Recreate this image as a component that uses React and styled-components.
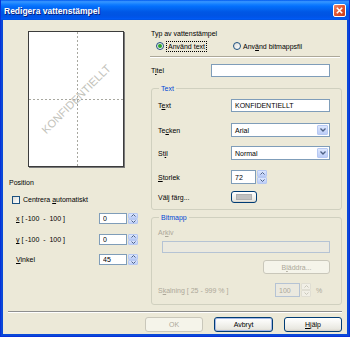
import React from 'react';
import styled, { createGlobalStyle } from 'styled-components';

const GlobalStyle = createGlobalStyle`
  html, body { margin: 0; padding: 0; background: #fff; }
  body { font-family: "Liberation Sans", Arial, sans-serif; }
  * { box-sizing: border-box; }
`;

const font = `"Liberation Sans", Arial, sans-serif`;

const Window = styled.div`
  width: 350px;
  height: 337px;
  display: flex;
  flex-direction: column;
  background: #0a48d8;
  border-left: 1px solid #0831d9;
  border-right: 1px solid #0831d9;
  border-bottom: 1px solid #0831d9;
`;

const TitleBar = styled.div`
  height: 20px;
  flex: none;
  display: flex;
  align-items: center;
  justify-content: space-between;
  padding: 1px 3px 0 3px;
  background: linear-gradient(
    to bottom,
    #0058ee 0%,
    #3593ff 8%,
    #288eff 14%,
    #127dff 22%,
    #036ffc 32%,
    #0262ee 48%,
    #0057e5 60%,
    #0054e3 76%,
    #0055eb 88%,
    #005bf5 94%,
    #0050dc 100%
  );
`;

const TitleText = styled.span`
  color: #fff;
  font: bold 8.5px ${font};
  text-shadow: 1px 1px 0 #0a1e7a;
`;

const CloseButton = styled.div`
  width: 13px;
  height: 13px;
  border: 1px solid #fff;
  border-radius: 2px;
  background: linear-gradient(135deg, #f08b6c 0%, #e2542f 50%, #c63d1b 100%);
  display: flex;
  align-items: center;
  justify-content: center;
`;

const Client = styled.div`
  flex: 1;
  margin: 0 2px 2px;
  background: #ece9d8;
  display: flex;
  flex-direction: column;
`;

const Main = styled.div`
  height: 291px;
  display: flex;
`;

const LeftCol = styled.div`
  width: 148px;
  display: flex;
  flex-direction: column;
`;

const RightCol = styled.div`
  width: 191px;
  display: flex;
  flex-direction: column;
`;

const PagePreview = styled.div`
  position: relative;
  margin: 11px 0 0 25px;
  width: 96px;
  height: 136px;
  background: #fff;
  border: 1px solid #3c3c3c;
  box-shadow: 1px 1px 0 #7a7a7a;
  overflow: hidden;
`;

const GuideV = styled.div`
  position: absolute;
  left: 48px;
  top: 0;
  bottom: 0;
  width: 1px;
  background: repeating-linear-gradient(to bottom, #a8a8a0 0 2px, transparent 2px 4px);
`;

const GuideH = styled.div`
  position: absolute;
  top: 67px;
  left: 0;
  right: 0;
  height: 1px;
  background: repeating-linear-gradient(to right, #a8a8a0 0 2px, transparent 2px 4px);
`;

const Watermark = styled.span`
  position: absolute;
  left: 50%;
  top: 50%;
  transform: translate(-50%, -50%) rotate(-45deg);
  font: 11px ${font};
  color: #c2c2ba;
  white-space: nowrap;
`;

const Label = styled.span`
  font: 7px ${font};
  line-height: 9px;
  color: ${(p) => (p.$disabled ? '#aca899' : '#000')};
  white-space: nowrap;
  width: ${(p) => (p.$w ? `${p.$w}px` : 'auto')};
  flex: none;
`;

const U = styled.span`
  text-decoration: underline;
`;

const SectionLabel = styled(Label)`
  display: block;
  margin: ${(p) => p.$mt || 0}px 0 0 ${(p) => p.$ml || 0}px;
`;

const CheckRow = styled.div`
  display: flex;
  align-items: center;
  gap: 3px;
  height: 9px;
  margin: 8px 0 0 9px;
`;

const CheckBox = styled.span`
  width: 8px;
  height: 8px;
  border: 1px solid #1c5180;
  background: linear-gradient(135deg, #dcdcd7 0%, #fff 100%);
  flex: none;
`;

const Row = styled.div`
  display: flex;
  align-items: center;
  height: ${(p) => p.$h}px;
  margin-top: ${(p) => p.$mt || 0}px;
  padding-left: ${(p) => p.$pl || 0}px;
  justify-content: ${(p) => (p.$end ? 'flex-end' : 'flex-start')};
`;

const Field = styled.input`
  width: ${(p) => p.$w}px;
  height: 100%;
  margin: 0 0 0 ${(p) => p.$ml || 0}px;
  padding: 0 0 0 3px;
  border: 1px solid ${(p) => (p.disabled ? '#b5c3d4' : '#7f9db9')};
  background: ${(p) => (p.disabled ? '#ebe9df' : '#fff')};
  color: ${(p) => (p.disabled ? '#aca899' : '#000')};
  font: 7px ${font};
  outline: none;
  flex: none;
`;

const Spin = styled.div`
  width: 10px;
  height: 100%;
  margin-left: 1px;
  display: flex;
  flex-direction: column;
  flex: none;
`;

const SpinHalf = styled.div`
  flex: 1;
  display: flex;
  align-items: center;
  justify-content: center;
  border: 1px solid ${(p) => (p.$disabled ? '#e0ded3' : '#b7c9f3')};
  border-radius: 1px;
  background: ${(p) =>
    p.$disabled ? '#f1efe6' : 'linear-gradient(to bottom, #dde7fd, #bccdf7)'};
`;

const Arrow = ({ up, disabled }) => (
  <svg width="5" height="3" viewBox="0 0 5 3">
    <path
      d={up ? 'M0.5 2.5 L2.5 0.5 L4.5 2.5' : 'M0.5 0.5 L2.5 2.5 L4.5 0.5'}
      fill="none"
      stroke={disabled ? '#c9c7ba' : '#4d6185'}
      strokeWidth="1"
    />
  </svg>
);

const Spinner = ({ disabled }) => (
  <Spin>
    <SpinHalf $disabled={disabled}>
      <Arrow up disabled={disabled} />
    </SpinHalf>
    <SpinHalf $disabled={disabled}>
      <Arrow disabled={disabled} />
    </SpinHalf>
  </Spin>
);

const Select = styled.div`
  width: ${(p) => p.$w}px;
  height: 100%;
  border: 1px solid #7f9db9;
  background: #fff;
  display: flex;
  align-items: center;
  justify-content: space-between;
  padding: 1px 1px 1px 3px;
  font: 7px ${font};
`;

const DropButton = styled.span`
  width: 11px;
  height: 100%;
  border: 1px solid #b7c9f3;
  border-radius: 1px;
  background: linear-gradient(to bottom, #dde7fd, #bccdf7);
  display: flex;
  align-items: center;
  justify-content: center;
`;

const Chevron = () => (
  <svg width="6" height="4" viewBox="0 0 6 4">
    <path d="M0.5 0.5 L3 3 L5.5 0.5" fill="none" stroke="#4d6185" strokeWidth="1.3" />
  </svg>
);

const RadioRow = styled.div`
  display: flex;
  align-items: center;
  height: 10px;
  margin-top: 3px;
  padding-left: 5px;
`;

const RadioItem = styled.label`
  display: flex;
  align-items: center;
  gap: 2px;
  width: ${(p) => (p.$w ? `${p.$w}px` : 'auto')};
`;

const RadioDot = styled.span`
  width: 8px;
  height: 8px;
  border-radius: 50%;
  border: 1px solid #1c5180;
  background: linear-gradient(135deg, #dcdcd7, #fff);
  display: flex;
  align-items: center;
  justify-content: center;
  flex: none;

  &::after {
    content: '';
    width: 4px;
    height: 4px;
    border-radius: 50%;
    background: ${(p) => (p.$on ? '#2aa72a' : 'transparent')};
  }
`;

const Focus = styled.span`
  display: inline-block;
  outline: 1px dotted #000;
  outline-offset: 0;
  padding: 0 1px;
  margin-left: 1px;
`;

const Separator = styled.div`
  height: 2px;
  margin: 5px 2px 0 -1px;
  border-top: 1px solid #aca899;
  border-bottom: 1px solid #fff;
`;

const Group = styled.fieldset`
  margin: ${(p) => p.$mt}px 0 0;
  padding: 0 11px ${(p) => p.$pb}px 6px;
  border: 1px solid #d0d0bf;
  border-radius: 3px;
  min-width: 0;
`;

const Legend = styled.legend`
  font: 7px ${font};
  line-height: 9px;
  color: #0046d5;
  padding: 0 2px;
  margin-left: 1px;
`;

const XpButton = styled.button`
  width: ${(p) => p.$w}px;
  height: ${(p) => p.$h}px;
  padding: 0;
  margin: 0;
  border: 1px solid ${(p) => (p.disabled ? '#c9c7ba' : '#003c74')};
  border-radius: 3px;
  background: ${(p) =>
    p.disabled
      ? '#f5f4ea'
      : 'linear-gradient(to bottom, #ffffff 0%, #f5f5f1 40%, #e8e7e0 85%, #d6d0c5 100%)'};
  color: ${(p) => (p.disabled ? '#aca899' : '#000')};
  font: 7px ${font};
  display: flex;
  align-items: center;
  justify-content: center;
  flex: none;
  box-shadow: ${(p) => (p.$default ? 'inset 0 0 0 1px #a4b8e6' : 'none')};
`;

const Swatch = styled.span`
  width: 16px;
  height: 6px;
  background: #c0c0c0;
  border: 1px solid #b0b0b0;
`;

const FooterLine = styled.div`
  height: 2px;
  margin: 0 5px 0 5px;
  border-top: 1px solid #8e8f8f;
  border-bottom: 1px solid #fff;
`;

const ButtonRow = styled.div`
  display: flex;
  justify-content: flex-end;
  gap: 11px;
  margin-top: 4px;
  padding-right: 5px;
`;

function SpinField({ label, value, mt }) {
  return (
    <Row $h={11} $mt={mt} $pl={13}>
      <Label $w={83}>{label}</Label>
      <Field $w={28} value={value} readOnly />
      <Spinner />
    </Row>
  );
}

export default function App() {
  return (
    <>
      <GlobalStyle />
      <Window>
        <TitleBar>
          <TitleText>Redigera vattenstämpel</TitleText>
          <CloseButton>
            <svg width="7" height="7" viewBox="0 0 7 7">
              <path d="M0.8 0.8 L6.2 6.2 M6.2 0.8 L0.8 6.2" stroke="#fff" strokeWidth="1.6" />
            </svg>
          </CloseButton>
        </TitleBar>
        <Client>
          <Main>
            <LeftCol>
              <PagePreview>
                <GuideV />
                <GuideH />
                <Watermark>KONFIDENTIELLT</Watermark>
              </PagePreview>
              <SectionLabel $mt={11} $ml={6}>Position</SectionLabel>
              <CheckRow>
                <CheckBox />
                <Label>
                  Centrera <U>a</U>utomatiskt
                </Label>
              </CheckRow>
              <SpinField
                mt={9}
                value="0"
                label={
                  <>
                    <U>x</U> [ -100&nbsp; - &nbsp;100 ]
                  </>
                }
              />
              <SpinField
                mt={10}
                value="0"
                label={
                  <>
                    <U>y</U> [ -100&nbsp; - &nbsp;100 ]
                  </>
                }
              />
              <SpinField
                mt={9}
                value="45"
                label={
                  <>
                    <U>V</U>inkel
                  </>
                }
              />
            </LeftCol>

            <RightCol>
              <SectionLabel $mt={9}>Typ av vattenstämpel</SectionLabel>
              <RadioRow>
                <RadioItem $w={77}>
                  <RadioDot $on />
                  <Label>
                    <Focus>Använd text</Focus>
                  </Label>
                </RadioItem>
                <RadioItem>
                  <RadioDot />
                  <Label>
                    Anv<U>ä</U>nd bitmappsfil
                  </Label>
                </RadioItem>
              </RadioRow>
              <Separator />
              <Row $h={13} $mt={6}>
                <Label $w={60}>
                  T<U>i</U>tel
                </Label>
                <Field $w={119} readOnly value="" />
              </Row>

              <Group $mt={7} $pb={6}>
                <Legend>Text</Legend>
                <Row $h={13} $mt={6}>
                  <Label $w={73}>
                    T<U>e</U>xt
                  </Label>
                  <Field $w={99} readOnly value="KONFIDENTIELLT" />
                </Row>
                <Row $h={14} $mt={11}>
                  <Label $w={73}>
                    Te<U>c</U>ken
                  </Label>
                  <Select $w={99}>
                    <span>Arial</span>
                    <DropButton>
                      <Chevron />
                    </DropButton>
                  </Select>
                </Row>
                <Row $h={14} $mt={9}>
                  <Label $w={73}>
                    St<U>i</U>l
                  </Label>
                  <Select $w={99}>
                    <span>Normal</span>
                    <DropButton>
                      <Chevron />
                    </DropButton>
                  </Select>
                </Row>
                <Row $h={14} $mt={10}>
                  <Label $w={73}>
                    <U>S</U>torlek
                  </Label>
                  <Field $w={25} readOnly value="72" />
                  <Spinner />
                </Row>
                <Row $h={12} $mt={7}>
                  <Label $w={73}>Välj färg...</Label>
                  <XpButton $w={26} $h={12}>
                    <Swatch />
                  </XpButton>
                </Row>
              </Group>

              <Group $mt={3} $pb={7}>
                <Legend>Bitmapp</Legend>
                <SectionLabel $mt={6}>
                  <Label $disabled>
                    Ar<U>k</U>iv
                  </Label>
                </SectionLabel>
                <Row $h={12} $mt={4}>
                  <Field $w={168} $ml={4} disabled readOnly value="" />
                </Row>
                <Row $h={14} $mt={7} $end>
                  <XpButton $w={67} $h={14} disabled>
                    B<U>l</U>äddra...
                  </XpButton>
                </Row>
                <Row $h={14} $mt={9}>
                  <Label $w={117} $disabled>
                    S<U>k</U>alning [ 25 - 999 % ]
                  </Label>
                  <Field $w={25} disabled readOnly value="100" />
                  <Spinner disabled />
                  <Label $disabled style={{ marginLeft: 5 }}>%</Label>
                </Row>
              </Group>
            </RightCol>
          </Main>

          <FooterLine />
          <ButtonRow>
            <XpButton $w={58} $h={15} disabled>
              OK
            </XpButton>
            <XpButton $w={59} $h={15} $default>
              Avbryt
            </XpButton>
            <XpButton $w={58} $h={15}>
              <span>
                <U>H</U>jälp
              </span>
            </XpButton>
          </ButtonRow>
        </Client>
      </Window>
    </>
  );
}
